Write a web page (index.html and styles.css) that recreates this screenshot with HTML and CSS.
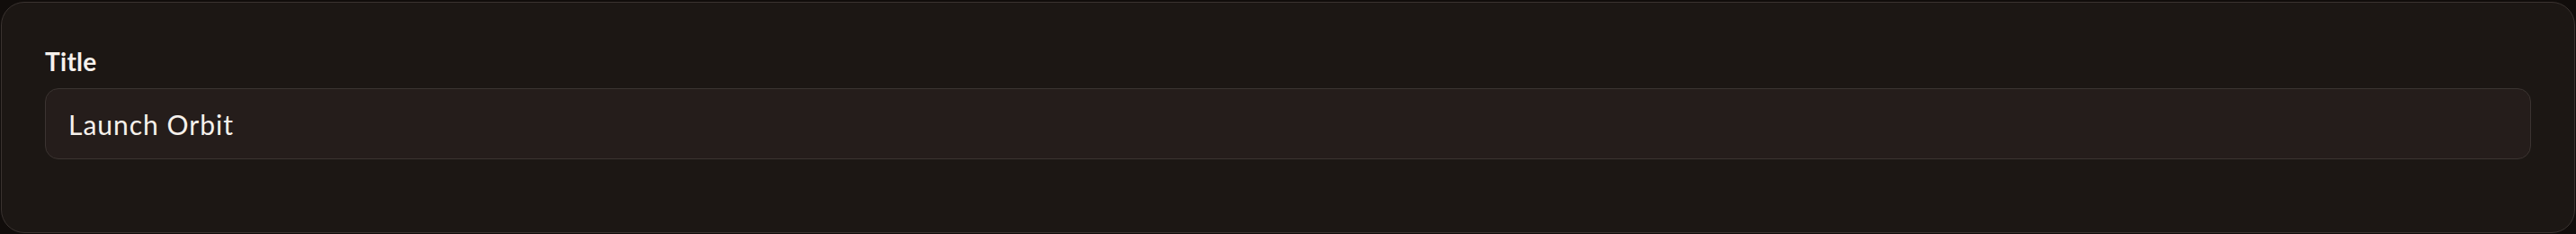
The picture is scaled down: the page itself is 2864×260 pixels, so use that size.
FILE: index.html
```html
<!DOCTYPE html>
<html lang="en">
<head>
    <meta charset="UTF-8">
    <meta name="viewport" content="width=device-width, initial-scale=1.0">
    <title>Edit Project</title>
    <link rel="stylesheet" href="styles.css">
</head>
<body class="page">
    <main class="form-card">
        <div class="form-field">
            <label class="field-label" for="title-input">Title</label>
            <input id="title-input" class="field-input" type="text" value="Launch Orbit">
        </div>
    </main>
</body>
</html>
```

FILE: styles.css
```css
.page {
    margin: 0;
    padding: 2px 1px 1px 1px;
    background-color: #110d0b;
    font-family: Lato, "Open Sans", sans-serif;
    color: #f6f1ec;
}

.form-card {
    background-color: #1c1714;
    border: 1px solid #3a3330;
    border-radius: 26px;
    padding: 48px 48px 48px 48px;
}

.form-field {
    display: flex;
    flex-direction: column;
    gap: 13px;
    margin-bottom: 33px;
}

.field-label {
    font-size: 28px;
    line-height: 34px;
    font-weight: bold;
    letter-spacing: 0.3px;
    color: #f6f1ec;
}

/* Text input */
.field-input {
    box-sizing: border-box;
    height: 79px;
    margin: 0;
    padding: 0 25px;
    background-color: #251d1b;
    border: 1px solid #3b3431;
    border-radius: 15px;
    font-family: inherit;
    font-size: 30px;
    letter-spacing: 1px;
    color: #f6f1ec;
    outline: none;
}
```
